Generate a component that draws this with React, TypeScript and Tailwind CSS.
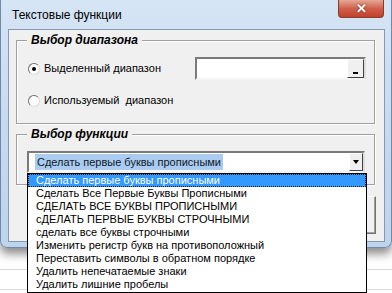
import React from 'react';

const items = [
  'Сделать первые буквы прописными',
  'Сделать Все Первые Буквы Прописными',
  'СДЕЛАТЬ ВСЕ БУКВЫ ПРОПИСНЫМИ',
  'сДЕЛАТЬ ПЕРВЫЕ БУКВЫ СТРОЧНЫМИ',
  'сделать все буквы строчными',
  'Изменить регистр букв на противоположный',
  'Переставить символы в обратном порядке',
  'Удалить непечатаемые знаки',
  'Удалить лишние пробелы',
];

const Radio: React.FC<{ checked?: boolean }> = ({ checked }) => (
  <div className="w-[12px] h-[12px] rounded-full bg-white border border-t-[#6e6e6e] border-l-[#6e6e6e] border-r-[#dcdcdc] border-b-[#dcdcdc] flex items-center justify-center shrink-0">
    {checked && <div className="w-[4px] h-[4px] rounded-full bg-black" />}
  </div>
);

const App: React.FC = () => {
  return (
    <div className="w-[392px] h-[293px] relative overflow-hidden bg-white font-['Liberation_Sans',Arial,sans-serif] text-black">
      {/* window */}
      <div className="h-[248px] rounded-b-[7px] border-l border-r border-b border-[#6f8aa8] bg-gradient-to-b from-[#d6e5f5] via-[#c6daf0] to-[#bed4ec] shadow-[0_6px_10px_rgba(0,0,0,0.45)] flex flex-col">
        <div className="h-[29px] flex items-start shrink-0">
          <span className="mt-[7px] ml-[11px] text-[12px] leading-[16px]">Текстовые функции</span>
          <div className="ml-auto mr-[7px] w-[46px] h-[18px] rounded-b-[4px] border border-t-0 border-[#8b3b2c] bg-gradient-to-b from-[#e6a797] via-[#d0604a] to-[#c2402b] flex items-center justify-center">
            <span className="text-white font-bold text-[13px] leading-none [text-shadow:0_0_2px_#5a1a10]">✕</span>
          </div>
        </div>
        {/* client area */}
        <div className="ml-[7px] w-[377px] h-[213px] border border-[#8599b3] bg-[#f0f0f0] flex flex-col text-[11px]">
          {/* frame 1 */}
          <div className="relative mt-[10px] ml-[7px] w-[359px] h-[84px] border border-[#a0a0a0] shadow-[inset_1px_1px_0_#fff,1px_1px_0_#fff] flex flex-col">
            <span className="absolute -top-[8px] left-[10px] px-[4px] bg-[#f0f0f0] font-bold italic text-[12px] leading-[14px]">Выбор диапазона</span>
            <div className="mt-[16px] h-[23px] flex items-center pl-[11px] pr-[8px]">
              <Radio checked />
              <span className="ml-[4px]">Выделенный диапазон</span>
              <div className="ml-auto w-[171px] h-[23px] bg-white border-2 border-t-[#7a7a7a] border-l-[#7a7a7a] border-r-[#dedede] border-b-[#f4f4f4] flex justify-end items-stretch">
                <div className="w-[17px] bg-[#f0f0f0] border border-t-[#fff] border-l-[#fff] border-r-[#404040] border-b-[#404040] flex items-end justify-center pb-[3px]">
                  <div className="w-[5px] h-[2px] bg-black" />
                </div>
              </div>
            </div>
            <div className="mt-[9px] h-[23px] flex items-center pl-[11px]">
              <Radio />
              <span className="ml-[4px] whitespace-pre">Используемый  диапазон</span>
            </div>
          </div>
          {/* frame 2 */}
          <div className="relative mt-[10px] ml-[7px] w-[359px] h-[51px] border border-[#a0a0a0] shadow-[inset_1px_1px_0_#fff,1px_1px_0_#fff]">
            <span className="absolute -top-[8px] left-[10px] px-[4px] bg-[#f0f0f0] font-bold italic text-[12px] leading-[14px]">Выбор функции</span>
            <div className="mt-[16px] ml-[10px] w-[338px] h-[22px] bg-white border-2 border-t-[#7a7a7a] border-l-[#7a7a7a] border-r-[#dedede] border-b-[#f4f4f4] flex items-center">
              <span className="ml-[6px] bg-[#a9ccf0] text-[#101828] text-[11px] leading-[16px] px-[2px]">Сделать первые буквы прописными</span>
              <div className="ml-auto mr-0 w-[14px] h-full bg-[#f0f0f0] border border-t-[#fff] border-l-[#fff] border-r-[#404040] border-b-[#404040] flex items-center justify-center">
                <span className="block w-0 h-0 border-l-[3px] border-r-[3px] border-t-[4px] border-l-transparent border-r-transparent border-t-black" />
              </div>
            </div>
          </div>
          {/* buttons */}
          <div className="mt-[11px] flex justify-end pr-[8px]">
            <div className="w-[96px] h-[38px] bg-[#f0f0f0] border border-t-[#fff] border-l-[#fff] border-r-[#707070] border-b-[#707070] shadow-[inset_-1px_-1px_0_#a0a0a0]" />
          </div>
        </div>
      </div>
      {/* sheet gridlines */}
      <div className="mt-[21px] border-t border-[#d9dcdf]" />
      <div className="mt-[19px] border-t border-[#d9dcdf]" />

      {/* open dropdown list */}
      <div className="absolute left-[27px] top-[173px] w-[340px] h-[120px] bg-white border border-black text-[11px] leading-[13px]">
        {items.map((t, i) => (
          <div
            key={i}
            className={
              i === 0
                ? 'h-[13px] pl-[8px] bg-[#3399ff] text-white outline-1 outline-dotted outline-[#1a1a1a] -outline-offset-1 whitespace-nowrap'
                : 'h-[13px] pl-[8px] whitespace-nowrap'
            }
          >
            {t}
          </div>
        ))}
      </div>
    </div>
  );
};

export default App;
